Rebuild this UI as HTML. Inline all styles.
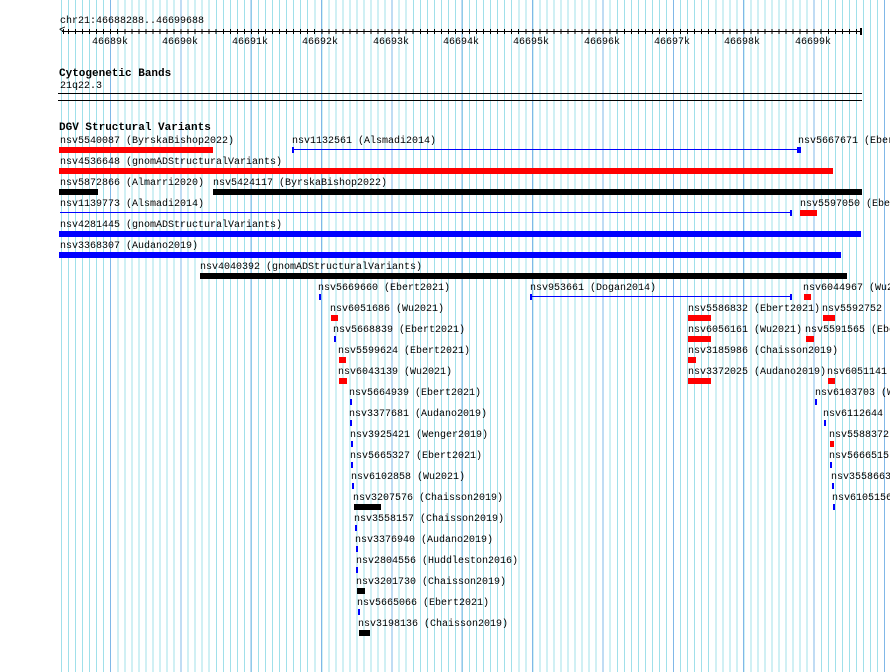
<!DOCTYPE html>
<html><head><meta charset="utf-8"><style>
html,body{margin:0;padding:0;background:#fff;}
#w{position:relative;width:890px;height:672px;overflow:hidden;background:#fff;font-family:"Liberation Mono","DejaVu Sans Mono",monospace;font-size:10px;color:#000;}
#g1{position:absolute;left:61px;top:0;width:829px;height:672px;background:repeating-linear-gradient(to right,#a0e0ea 0,#a0e0ea 1px,transparent 1px,transparent 7.035px);}
#g2{position:absolute;left:110px;top:0;width:780px;height:672px;background:repeating-linear-gradient(to right,#80b8e8 0,#80b8e8 1px,transparent 1px,transparent 70.35px);}
.t{position:absolute;white-space:pre;line-height:12px;margin-top:2px;}
.b{position:absolute;height:6px;}
.r{background:#f00}.k{background:#000}.u{background:#00f}
.h{position:absolute;font-weight:bold;font-size:11px;white-space:pre;margin-top:1px;}
.l{position:absolute;height:1px;background:#00f}
</style></head><body><div id="w">
<div id="g1"></div><div id="g2"></div>
<div class="t" style="left:60px;top:14px">chr21:46688288..46699688</div>
<div style="position:absolute;left:62px;top:31px;width:800px;height:1px;background:#000"></div>
<div style="position:absolute;left:62px;top:29px;width:800px;height:5px;background:repeating-linear-gradient(to right,#000 0,#000 1px,transparent 1px,transparent 7.035px);background-position:6px 0"></div>
<div class="t" style="left:59px;top:23px;font-size:11px">&lt;</div>
<div style="position:absolute;left:860px;top:28px;width:2px;height:7px;background:#000"></div>
<div class="t" style="left:92px;top:35px">46689k</div>
<div class="t" style="left:162px;top:35px">46690k</div>
<div class="t" style="left:232px;top:35px">46691k</div>
<div class="t" style="left:302px;top:35px">46692k</div>
<div class="t" style="left:373px;top:35px">46693k</div>
<div class="t" style="left:443px;top:35px">46694k</div>
<div class="t" style="left:513px;top:35px">46695k</div>
<div class="t" style="left:584px;top:35px">46696k</div>
<div class="t" style="left:654px;top:35px">46697k</div>
<div class="t" style="left:724px;top:35px">46698k</div>
<div class="t" style="left:795px;top:35px">46699k</div>
<div class="h" style="left:59px;top:67px">Cytogenetic Bands</div>
<div class="t" style="left:60px;top:79px">21q22.3</div>
<div style="position:absolute;left:58px;top:93px;width:804px;height:1px;background:#000"></div>
<div style="position:absolute;left:58px;top:100px;width:804px;height:1px;background:#000"></div>
<div class="h" style="left:59px;top:121px">DGV Structural Variants</div>

<div class="t" style="left:60px;top:134px">nsv5540087 (ByrskaBishop2022)</div><div class="b r" style="left:59px;top:147px;width:154px"></div>
<div class="t" style="left:292px;top:134px">nsv1132561 (Alsmadi2014)</div><div class="l" style="left:292px;top:149px;width:506px"></div><div class="b u" style="left:292px;top:147px;width:2px"></div><div class="b u" style="left:797px;top:147px;width:4px"></div>
<div class="t" style="left:798px;top:134px">nsv5667671 (Ebert2021)</div>

<div class="t" style="left:60px;top:155px">nsv4536648 (gnomADStructuralVariants)</div><div class="b r" style="left:59px;top:168px;width:774px"></div>

<div class="t" style="left:60px;top:176px">nsv5872866 (Almarri2020)</div><div class="b k" style="left:59px;top:189px;width:39px"></div>
<div class="t" style="left:213px;top:176px">nsv5424117 (ByrskaBishop2022)</div><div class="b k" style="left:213px;top:189px;width:649px"></div>

<div class="t" style="left:60px;top:197px">nsv1139773 (Alsmadi2014)</div><div class="l" style="left:60px;top:212px;width:731px"></div><div class="b u" style="left:790px;top:210px;width:2px"></div>
<div class="t" style="left:800px;top:197px">nsv5597050 (Ebert2021)</div><div class="b r" style="left:800px;top:210px;width:17px"></div>

<div class="t" style="left:60px;top:218px">nsv4281445 (gnomADStructuralVariants)</div><div class="b u" style="left:59px;top:231px;width:802px"></div>
<div class="t" style="left:60px;top:239px">nsv3368307 (Audano2019)</div><div class="b u" style="left:59px;top:252px;width:782px"></div>
<div class="t" style="left:200px;top:260px">nsv4040392 (gnomADStructuralVariants)</div><div class="b k" style="left:200px;top:273px;width:647px"></div>

<div class="t" style="left:318px;top:281px">nsv5669660 (Ebert2021)</div><div class="b u" style="left:319px;top:294px;width:2px"></div>
<div class="t" style="left:530px;top:281px">nsv953661 (Dogan2014)</div><div class="l" style="left:530px;top:296px;width:261px"></div><div class="b u" style="left:530px;top:294px;width:2px"></div><div class="b u" style="left:790px;top:294px;width:2px"></div>
<div class="t" style="left:803px;top:281px">nsv6044967 (Wu2021)</div><div class="b r" style="left:804px;top:294px;width:7px"></div>

<div class="t" style="left:330px;top:302px">nsv6051686 (Wu2021)</div><div class="b r" style="left:331px;top:315px;width:7px"></div>
<div class="t" style="left:688px;top:302px">nsv5586832 (Ebert2021)</div><div class="b r" style="left:688px;top:315px;width:23px"></div>
<div class="t" style="left:822px;top:302px">nsv5592752</div><div class="b r" style="left:823px;top:315px;width:12px"></div>

<div class="t" style="left:333px;top:323px">nsv5668839 (Ebert2021)</div><div class="b u" style="left:334px;top:336px;width:2px"></div>
<div class="t" style="left:688px;top:323px">nsv6056161 (Wu2021)</div><div class="b r" style="left:688px;top:336px;width:23px"></div>
<div class="t" style="left:805px;top:323px">nsv5591565 (Ebert2021)</div><div class="b r" style="left:806px;top:336px;width:8px"></div>

<div class="t" style="left:338px;top:344px">nsv5599624 (Ebert2021)</div><div class="b r" style="left:339px;top:357px;width:7px"></div>
<div class="t" style="left:688px;top:344px">nsv3185986 (Chaisson2019)</div><div class="b r" style="left:688px;top:357px;width:8px"></div>

<div class="t" style="left:338px;top:365px">nsv6043139 (Wu2021)</div><div class="b r" style="left:339px;top:378px;width:8px"></div>
<div class="t" style="left:688px;top:365px">nsv3372025 (Audano2019)</div><div class="b r" style="left:688px;top:378px;width:23px"></div>
<div class="t" style="left:827px;top:365px">nsv6051141</div><div class="b r" style="left:828px;top:378px;width:7px"></div>

<div class="t" style="left:349px;top:386px">nsv5664939 (Ebert2021)</div><div class="b u" style="left:350px;top:399px;width:2px"></div>
<div class="t" style="left:815px;top:386px">nsv6103703 (Wu2021)</div><div class="b u" style="left:815px;top:399px;width:2px"></div>

<div class="t" style="left:349px;top:407px">nsv3377681 (Audano2019)</div><div class="b u" style="left:350px;top:420px;width:2px"></div>
<div class="t" style="left:823px;top:407px">nsv6112644</div><div class="b u" style="left:824px;top:420px;width:2px"></div>

<div class="t" style="left:350px;top:428px">nsv3925421 (Wenger2019)</div><div class="b u" style="left:351px;top:441px;width:2px"></div>
<div class="t" style="left:829px;top:428px">nsv5588372</div><div class="b r" style="left:830px;top:441px;width:4px"></div>

<div class="t" style="left:350px;top:449px">nsv5665327 (Ebert2021)</div><div class="b u" style="left:351px;top:462px;width:2px"></div>
<div class="t" style="left:829px;top:449px">nsv5666515</div><div class="b u" style="left:830px;top:462px;width:2px"></div>

<div class="t" style="left:351px;top:470px">nsv6102858 (Wu2021)</div><div class="b u" style="left:352px;top:483px;width:2px"></div>
<div class="t" style="left:831px;top:470px">nsv3558663</div><div class="b u" style="left:832px;top:483px;width:2px"></div>

<div class="t" style="left:353px;top:491px">nsv3207576 (Chaisson2019)</div><div class="b k" style="left:354px;top:504px;width:27px"></div>
<div class="t" style="left:832px;top:491px">nsv6105156</div><div class="b u" style="left:833px;top:504px;width:2px"></div>

<div class="t" style="left:354px;top:512px">nsv3558157 (Chaisson2019)</div><div class="b u" style="left:355px;top:525px;width:2px"></div>
<div class="t" style="left:355px;top:533px">nsv3376940 (Audano2019)</div><div class="b u" style="left:356px;top:546px;width:2px"></div>
<div class="t" style="left:356px;top:554px">nsv2804556 (Huddleston2016)</div><div class="b u" style="left:356px;top:567px;width:2px"></div>
<div class="t" style="left:356px;top:575px">nsv3201730 (Chaisson2019)</div><div class="b k" style="left:357px;top:588px;width:8px"></div>
<div class="t" style="left:357px;top:596px">nsv5665066 (Ebert2021)</div><div class="b u" style="left:358px;top:609px;width:2px"></div>
<div class="t" style="left:358px;top:617px">nsv3198136 (Chaisson2019)</div><div class="b k" style="left:359px;top:630px;width:11px"></div>
</div></body></html>
